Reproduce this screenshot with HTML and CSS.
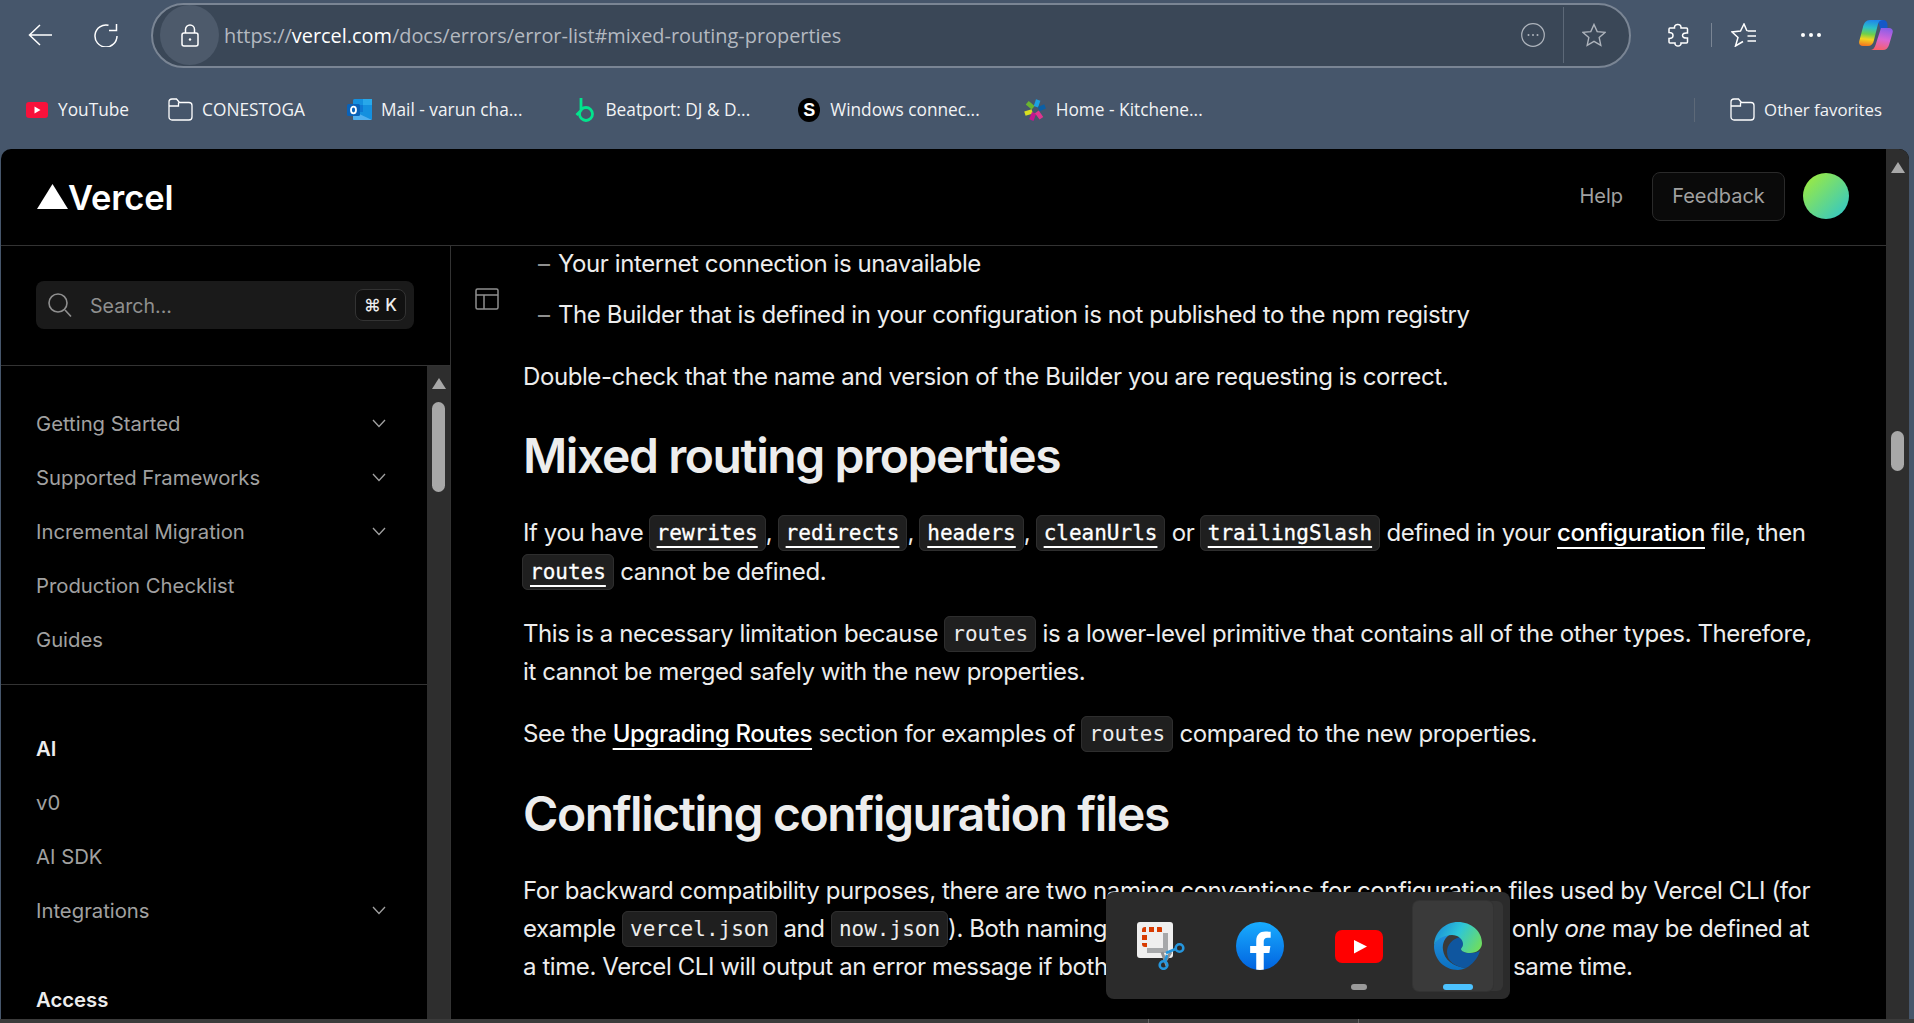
FILE: index.html
```html
<!DOCTYPE html>
<html lang="en">
<head>
  <meta charset="UTF-8" />
  <title>Vercel Docs - Error List</title>
  <link rel="stylesheet" href="styles.css">
</head>
<body>
  <!-- browser toolbar -->
  <div class="toolbar">
    <svg class="tool back" viewBox="0 0 24 22"><path d="M12 1 1.500 11l10.500 10M1.500 11h22.500"/></svg>
    <svg class="tool reload" viewBox="0 0 24 24"><path d="M14.500 2.300A11 11 0 1 0 23 13M22.500 1v6.500H15"/></svg>
    <div class="address">
      <div class="lock">
        <svg viewBox="0 0 18 23"><path d="M4.500 9V5.500a4.500 4.500 0 0 1 9 0V9"/><rect x="1" y="9" width="16" height="13" rx="2"/><circle class="dot" cx="9" cy="15.500" r="1.200"/></svg>
      </div>
      <div class="url">https://<b>vercel.com</b>/docs/errors/error-list#mixed-routing-properties</div>
      <svg class="addr-dots" viewBox="0 0 24 24"><circle cx="12" cy="12" r="11.300"/><circle class="dot" cx="7.500" cy="12" r="1"/><circle class="dot" cx="12" cy="12" r="1"/><circle class="dot" cx="16.500" cy="12" r="1"/></svg>
      <div class="addr-sep"></div>
      <svg class="addr-star" viewBox="0 0 24 24"><path d="M12 1.500 15.200 8.600 23 9.400 17.200 14.600 18.800 22.300 12 18.400 5.200 22.300 6.800 14.600 1 9.400 8.800 8.600Z"/></svg>
    </div>
    <svg class="tool puzzle" viewBox="0 0 22 24"><path d="M7.500 5C7 1 13.500 0 14 4V5H19.500a1 1 0 0 1 1 1V10C17 9.500 15.500 11 15.500 12.500C15.500 14 17 15.500 20.500 15V19a1 1 0 0 1-1 1H14C14.500 24 7.500 24 8 20H3a1 1 0 0 1-1-1V15.500C5 15.500 6 14 6 12.500C6 11 5 9.500 2 9.500V6a1 1 0 0 1 1-1Z"/></svg>
    <div class="tool-sep"></div>
    <svg class="tool favs" viewBox="0 0 26 24"><path d="M16.500 8H25M16.500 13H25M16.500 18H25M16 8 13 1 9.500 8 1 9 7 14.500 4.500 23 12 18.500"/></svg>
    <div class="more"><i></i><i></i><i></i></div>
    <svg class="copilot" viewBox="0 0 34 30">
      <defs>
        <linearGradient id="cpA" x1="0.500" y1="0" x2="0.400" y2="1"><stop offset="0" stop-color="#1f86ea"/><stop offset="0.300" stop-color="#2cc0c8"/><stop offset="0.550" stop-color="#6fd04a"/><stop offset="0.750" stop-color="#f3d51f"/><stop offset="1" stop-color="#f5781f"/></linearGradient>
        <linearGradient id="cpB" x1="0.600" y1="0" x2="0.400" y2="1"><stop offset="0" stop-color="#8a5ee8"/><stop offset="0.500" stop-color="#d765d6"/><stop offset="1" stop-color="#f7606a"/></linearGradient>
      </defs>
      <path fill="#1558c8" d="M17 0H24C27 0 28.500 2 28.500 5V9H21C21 6 20 3 17 0Z"/>
      <path fill="url(#cpB)" d="M22 8H30C33 8 34.500 10 33.500 13L30 25C29 28 27 30 24 30H11C14 30 15.500 28 16.500 25Z"/>
      <path fill="url(#cpA)" d="M11 0H24C21 0 19.500 2 19 4L15 20C14.300 24 12 26 9 26H4C1 26-.5 24 .3 21L4 7C5 3 7 0 11 0Z"/>
    </svg>
  </div>

  <!-- favorites bar -->
  <div class="favbar">
    <div class="fav fav-yt">
      <svg class="fav-icon" viewBox="0 0 22 16"><rect width="22" height="16" rx="3" fill="#f8113b"/><path d="M8.500 4.500 14.500 8 8.500 11.500Z" fill="#fff"/></svg>
      <span>YouTube</span>
    </div>
    <div class="fav fav-con">
      <svg class="folder" viewBox="0 0 25 23"><path d="M1 4a3 3 0 0 1 3-3h4.500l3 3.500H21a3 3 0 0 1 3 3V19a3 3 0 0 1-3 3H4a3 3 0 0 1-3-3ZM1 8h9.500V4.500"/></svg>
      <span>CONESTOGA</span>
    </div>
    <div class="fav fav-mail">
      <svg class="fav-icon" viewBox="0 0 25 21"><rect x="6" y="0" width="19" height="21" rx="1.500" fill="#1490df"/><rect x="16" y="0" width="9" height="6" fill="#28a8ea"/><rect x="6" y="6" width="10" height="7" fill="#0f78d4"/><path d="M6 12 25 21H7a1 1 0 0 1-1-1Z" fill="#50b0f0"/><rect x="0" y="5" width="13" height="12" rx="1.500" fill="#0a62b8"/><ellipse cx="6.500" cy="11" rx="2.500" ry="3.300" fill="none" stroke="#fff" stroke-width="1.800"/></svg>
      <span>Mail - varun cha...</span>
    </div>
    <div class="fav fav-beat">
      <svg class="fav-icon" viewBox="0 0 24 26"><path d="M8 1V13.500L3.500 18M13 23.500a6.500 6.500 0 1 0 0-13 6.500 6.500 0 0 0 0 13Z" fill="none" stroke="#02e48d" stroke-width="2.800"/></svg>
      <span>Beatport: DJ &amp; D...</span>
    </div>
    <div class="fav fav-win">
      <span class="s-badge">S</span>
      <span>Windows connec...</span>
    </div>
    <div class="fav fav-home">
      <svg class="fav-icon" viewBox="0 0 24 24" fill="none" stroke-width="5">
        <path d="M3.500 4 10 9.500" stroke="#6ab42f"/>
        <path d="M15.500 1 13 8.500" stroke="#1ba1e2"/>
        <path d="M16 11 23 8" stroke="#0b5fa5"/>
        <path d="M1 16 9 13.500" stroke="#d9e021"/>
        <path d="M8 23 11 15" stroke="#c2188f"/>
        <path d="M14 14 19 21" stroke="#e0358f"/>
      </svg>
      <span>Home - Kitchene...</span>
    </div>
    <div class="fav-sep"></div>
    <div class="fav fav-other">
      <svg class="folder" viewBox="0 0 25 23"><path d="M1 4a3 3 0 0 1 3-3h4.500l3 3.500H21a3 3 0 0 1 3 3V19a3 3 0 0 1-3 3H4a3 3 0 0 1-3-3ZM1 8h9.500V4.500"/></svg>
      <span>Other favorites</span>
    </div>
  </div>

  <!-- the page itself -->
  <div class="window">
    <div class="page">
      <header class="site-header">
        <div class="logo">
          <svg viewBox="0 0 31 25"><path d="M15.500 0 31 25H0Z" fill="#fff"/></svg>
          <span>Vercel</span>
        </div>
        <a class="help">Help</a>
        <button class="feedback">Feedback</button>
        <div class="avatar"></div>
      </header>

      <div class="columns">
        <aside class="sidebar">
          <div class="search-wrap">
            <div class="search">
              <svg viewBox="0 0 24 24"><circle cx="10" cy="10" r="9"/><path d="M17 17l6 6.500"/></svg>
              <span class="search-text">Search...</span>
              <kbd>⌘ K</kbd>
            </div>
          </div>
          <div class="nav-wrap">
            <nav class="nav">
              <div class="nav-item">Getting Started<svg class="chev" viewBox="0 0 14 9"><path d="M1 1l6 6.500L13 1"/></svg></div>
              <div class="nav-item">Supported Frameworks<svg class="chev" viewBox="0 0 14 9"><path d="M1 1l6 6.500L13 1"/></svg></div>
              <div class="nav-item">Incremental Migration<svg class="chev" viewBox="0 0 14 9"><path d="M1 1l6 6.500L13 1"/></svg></div>
              <div class="nav-item">Production Checklist</div>
              <div class="nav-item">Guides</div>
              <div class="nav-divider"></div>
              <div class="nav-item nav-head">AI</div>
              <div class="nav-item">v0</div>
              <div class="nav-item">AI SDK</div>
              <div class="nav-item">Integrations<svg class="chev" viewBox="0 0 14 9"><path d="M1 1l6 6.500L13 1"/></svg></div>
              <div class="nav-item nav-head nav-gap">Access</div>
            </nav>
            <div class="scrollbar side-scroll">
              <div class="arrow"></div>
              <div class="thumb"></div>
            </div>
          </div>
        </aside>

        <main class="main">
          <div class="gutter">
            <svg viewBox="0 0 24 22"><rect x="1" y="1" width="22" height="20" rx="1.500"/><path d="M1 7h22M9 7v14"/></svg>
          </div>
          <article class="content">
            <ul class="dash-list">
              <li>Your internet connection is unavailable</li>
              <li>The Builder that is defined in your configuration is not published to the npm registry</li>
            </ul>
            <p>Double-check that the name and version of the Builder you are requesting is correct.</p>
            <h2>Mixed routing properties</h2>
            <p class="after-h2">If you have <code><a>rewrites</a></code>, <code><a>redirects</a></code>, <code><a>headers</a></code>, <code><a>cleanUrls</a></code> or <code><a>trailingSlash</a></code> defined in your <a class="link">configuration</a> file, then<br><code><a>routes</a></code> cannot be defined.</p>
            <p>This is a necessary limitation because <code>routes</code> is a lower-level primitive that contains all of the other types. Therefore,<br>it cannot be merged safely with the new properties.</p>
            <p>See the <a class="link">Upgrading Routes</a> section for examples of <code>routes</code> compared to the new properties.</p>
            <h2>Conflicting configuration files</h2>
            <p class="after-h2">For backward compatibility purposes, there are two naming conventions for configuration files used by Vercel CLI (for<br>example <code>vercel.json</code> and <code>now.json</code>). Both naming <span class="tight">conventions are supported, however</span> only <em>one</em> may be defined at<br>a time. Vercel CLI will output an error message if both of <span class="tight">these two files are detected at</span> the same time.</p>
          </article>
        </main>
      </div>
    </div>
    <div class="scrollbar page-scroll">
      <div class="arrow"></div>
      <div class="thumb"></div>
    </div>
  </div>

  <div class="taskbar-edge"><i></i><i></i></div>

  <!-- taskbar overflow flyout, sits over the page -->
  <div class="flyout">
    <div class="fly-slot">
      <svg viewBox="0 0 48 48">
        <rect width="36" height="36" rx="3" fill="#efefef"/>
        <path d="M5 8a3 3 0 0 1 3-3h1v5H5ZM12 5h5v5h-5ZM20 5h4a3 3 0 0 1 1 .5V10h-5ZM5 13h5v5H5ZM5 21h5v4H8a3 3 0 0 1-3-3Z" fill="#d83b01"/>
        <path d="M26 11h5v20h-21v-5h16Z" fill="#a6a8aa"/>
        <path d="M25 30 30 44M34 30 29 38" stroke="#8f9194" stroke-width="3" fill="none"/>
        <circle cx="42.500" cy="26" r="3.800" fill="none" stroke="#2596dd" stroke-width="2.600"/>
        <circle cx="26.500" cy="43" r="3.800" fill="none" stroke="#2596dd" stroke-width="2.600"/>
        <path d="M38.500 27 29 31" stroke="#2596dd" stroke-width="2.600"/>
        <path d="M28 39.500 30 33" stroke="#2596dd" stroke-width="2.600"/>
      </svg>
    </div>
    <div class="fly-slot">
      <svg viewBox="0 0 24 24">
        <defs><linearGradient id="fb" x1="0.500" y1="0" x2="0.500" y2="1"><stop offset="0" stop-color="#18acfe"/><stop offset="1" stop-color="#0163e0"/></linearGradient><clipPath id="fbClip"><circle cx="12" cy="12" r="12"/></clipPath></defs>
        <circle cx="12" cy="12" r="12" fill="url(#fb)"/>
        <path clip-path="url(#fbClip)" fill="#fff" d="M16.670 15.470l.53-3.470h-3.330V9.750c0-.95.47-1.870 1.950-1.870h1.510V4.930s-1.370-.23-2.680-.23c-2.740 0-4.530 1.660-4.530 4.660V12H7.070v3.470h3.050V24h3.750v-8.530z"/>
      </svg>
    </div>
    <div class="fly-slot">
      <svg class="yt" viewBox="0 0 48 33"><rect width="48" height="33" rx="7" fill="#f00"/><path d="M19 10 32 16.500 19 23.500Z" fill="#fff"/></svg>
      <span class="pip"></span>
    </div>
    <div class="fly-slot fly-active">
      <svg viewBox="0 0 48 48">
        <defs>
          <linearGradient id="edgeA" x1="0" y1="0.300" x2="1" y2="0.700"><stop offset="0" stop-color="#1a8fd6"/><stop offset="0.450" stop-color="#2ec6d8"/><stop offset="1" stop-color="#6fdd5f"/></linearGradient>
          <linearGradient id="edgeB" x1="0.500" y1="0" x2="0.500" y2="1"><stop offset="0" stop-color="#2291dd"/><stop offset="1" stop-color="#0b6fc0"/></linearGradient>
        </defs>
        <path fill="url(#edgeB)" d="M0 24C1 17 9 12 17 12C11 15 8 21 9 28C10 37 19 45 32 46C29 47.300 26 48 24 48C10 48 0 37 0 24Z"/>
        <path fill="#0f569f" d="M13 30C13 23 18 17 26 15C29 18 29 20 29 22C29 25 27 26 27 27C27 29 31 31 36 31C40 31 44 30 46 29C44 36 38 43 32 46C21 45 13 39 13 30Z"/>
        <path fill="url(#edgeA)" d="M24 0C37 0 48 9 48 21C48 27 43 31 36 31C31 31 27 29 27 27C27 26 29 25 29 22C29 17 24 13 18 13C9 13 1 18 0 24C0 10 11 0 24 0Z"/>
      </svg>
      <span class="pip pip-on"></span>
    </div>
  </div>
</body>
</html>
```

FILE: styles.css
```css
* {
  box-sizing: border-box;
}

html,
body {
  margin: 0;
  height: 1023px;
  overflow: hidden;
}

body {
  position: relative;
  display: flex;
  flex-direction: column;
  background: #46566b;
  font-family: "Open Sans", sans-serif;
  color: #fff;
}

svg {
  display: block;
  flex: none;
  fill: none;
}

/* toolbar */
.toolbar {
  height: 70px;
  flex: none;
  display: flex;
  align-items: center;
  padding-left: 28px;
}

.tool {
  stroke: #fff;
  stroke-width: 1.5;
}

.back {
  width: 24px;
  height: 22px;
}

.reload {
  width: 24px;
  height: 24px;
  margin-left: 42px;
}

.address {
  width: 1480px;
  height: 65px;
  margin-left: 33px;
  display: flex;
  align-items: center;
  padding-left: 7px;
  background: #3a4757;
  border: 2px solid #7a8594;
  border-radius: 33px;
}

.lock {
  width: 59px;
  height: 60px;
  border-radius: 50%;
  background: #4d5a6b;
  display: flex;
  align-items: center;
  justify-content: center;
}

.lock svg {
  width: 18px;
  height: 23px;
  stroke: #fff;
  stroke-width: 1.5;
}

.dot {
  fill: #fff;
  stroke: none;
}

.url {
  flex: 1;
  margin-left: 5px;
  font-size: 19.9px;
  color: #b4b9c0;
  white-space: nowrap;
}

.url b {
  font-weight: 400;
  color: #fff;
}

.addr-dots {
  width: 24px;
  height: 24px;
  stroke: #aeb4bc;
  stroke-width: 1.2;
}

.addr-dots .dot {
  fill: #aeb4bc;
}

.addr-sep {
  width: 1px;
  height: 56px;
  margin-left: 18px;
  background: #5d6978;
}

.addr-star {
  width: 24px;
  height: 24px;
  margin: 0 23px 0 18px;
  stroke: #aeb4bc;
  stroke-width: 1.4;
}

.puzzle {
  width: 22px;
  height: 24px;
  margin-left: 36px;
}

.tool-sep {
  width: 1px;
  height: 24px;
  margin-left: 22px;
  background: #7a8594;
}

.favs {
  width: 26px;
  height: 24px;
  margin-left: 19px;
}

.more {
  width: 20px;
  margin-left: 44px;
  display: flex;
  justify-content: space-between;
}

.more i {
  width: 4px;
  height: 4px;
  background: #fff;
  border-radius: 50%;
}

.copilot {
  width: 34px;
  height: 30px;
  margin-left: 38px;
}

/* favorites */
.favbar {
  height: 79px;
  flex: none;
  display: flex;
  align-items: center;
  padding: 0 0 0 26px;
  font-size: 17.3px;
  white-space: nowrap;
}

.fav {
  display: flex;
  align-items: center;
  gap: 10px;
  color: #f2f3f5;
}

.fav-icon {
  width: 22px;
  height: 22px;
}

.fav-yt .fav-icon {
  height: 16px;
}

.fav-con {
  gap: 9px;
  margin-left: 39px;
}

.fav-mail {
  gap: 9px;
  margin-left: 42px;
}

.fav-mail .fav-icon {
  width: 25px;
  height: 21px;
}

.fav-beat {
  gap: 8px;
  margin-left: 51px;
}

.fav-beat .fav-icon {
  width: 24px;
  height: 26px;
}

.fav-win {
  margin-left: 48px;
}

.fav-home {
  margin-left: 44px;
}

.folder {
  width: 25px;
  height: 23px;
  stroke: #fff;
  stroke-width: 1.3;
}

.s-badge {
  width: 22px;
  height: 24px;
  border-radius: 50%;
  background: #000;
  color: #fff;
  font-family: "Liberation Sans", sans-serif;
  font-size: 18px;
  font-weight: 700;
  text-align: center;
  line-height: 24px;
}

.fav-sep {
  width: 1px;
  height: 24px;
  margin-left: auto;
  background: #5d6978;
}

.fav-other {
  gap: 9px;
  margin: 0 32px 0 35px;
  font-size: 16.8px;
}

/* page window */
.window {
  height: 870px;
  flex: none;
  margin: 0 5px 0 1px;
  display: flex;
  background: #000;
  border-radius: 10px 10px 0 0;
  overflow: hidden;
}

.page {
  flex: 1;
  min-width: 0;
  display: flex;
  flex-direction: column;
  font-family: Inter, sans-serif;
}

.scrollbar {
  flex: none;
  background: #2e2e2e;
  position: relative;
  display: flex;
  flex-direction: column;
  align-items: center;
}

.arrow {
  width: 0;
  height: 0;
  border-left: 7px solid transparent;
  border-right: 7px solid transparent;
  border-bottom: 11px solid #a8a8a8;
}

.thumb {
  width: 13px;
  background: #a8a8a8;
  border-radius: 7px;
}

.page-scroll {
  width: 23px;
  padding-top: 13px;
}

.page-scroll .thumb {
  height: 40px;
  margin-top: 258px;
}

.side-scroll {
  width: 23px;
  padding-top: 12px;
}

.side-scroll .thumb {
  height: 90px;
  margin-top: 13px;
}

/* site header */
.site-header {
  height: 97px;
  flex: none;
  display: flex;
  align-items: center;
  padding: 0 37px 2px 36px;
  border-bottom: 1px solid #333;
}

.logo {
  display: flex;
  align-items: center;
  gap: 0;
  margin-right: auto;
  font-size: 34.5px;
  font-weight: 600;
  letter-spacing: -0.1px;
  color: #fff;
}

.logo span {
  margin-top: 2px;
}

.logo svg {
  width: 31px;
  height: 25px;
}

.help {
  font-size: 20px;
  color: #a1a1a1;
}

.feedback {
  width: 133px;
  height: 49px;
  margin: 0 18px 0 29px;
  background: #0a0a0a;
  border: 1px solid #2a2a2a;
  border-radius: 8px;
  font: 20px Inter, sans-serif;
  color: #a1a1a1;
}

.avatar {
  width: 46px;
  height: 46px;
  border-radius: 50%;
  background: linear-gradient(135deg, #a6ee34, #2bc4d0);
}

.columns {
  flex: 1;
  min-height: 0;
  display: flex;
}

/* sidebar */
.sidebar {
  width: 450px;
  flex: none;
  display: flex;
  flex-direction: column;
  border-right: 1px solid #333;
}

.search-wrap {
  height: 120px;
  flex: none;
  padding: 35px 36px 0 35px;
  border-bottom: 1px solid #333;
}

.search {
  height: 48px;
  display: flex;
  align-items: center;
  padding: 0 8px 0 12px;
  background: #1a1a1a;
  border-radius: 8px;
}

.search svg {
  width: 24px;
  height: 24px;
  stroke: #8f8f8f;
  stroke-width: 1.6;
}

.search-text {
  flex: 1;
  margin: 2px 0 0 18px;
  font-size: 19.6px;
  color: #8f8f8f;
}

kbd {
  width: 51px;
  height: 32px;
  border: 1px solid #333;
  border-radius: 8px;
  background: #111;
  font: 500 17px/30px Inter, "DejaVu Sans", sans-serif;
  text-align: center;
  color: #ededed;
}

.nav-wrap {
  flex: 1;
  min-height: 0;
  display: flex;
}

.nav {
  flex: 1;
  min-width: 0;
  padding-top: 30px;
  overflow: hidden;
}

.nav-item {
  height: 54px;
  display: flex;
  align-items: center;
  justify-content: space-between;
  padding: 0 41px 0 35px;
  font-size: 20.3px;
  color: #a1a1a1;
}

.nav-head {
  font-weight: 600;
  color: #ededed;
}

.nav-gap {
  margin-top: 35px;
}

.nav-divider {
  height: 1px;
  margin: 18px 0 36px;
  background: #333;
}

.chev {
  width: 14px;
  height: 9px;
  stroke: #a1a1a1;
  stroke-width: 1.3;
}

/* main */
.main {
  flex: 1;
  min-width: 0;
  display: flex;
  overflow: hidden;
}

.gutter {
  width: 72px;
  flex: none;
  padding: 42px 0 0 24px;
}

.gutter svg {
  width: 24px;
  height: 22px;
  stroke: #8f8f8f;
  stroke-width: 1.5;
}

.content {
  flex: 1;
  min-width: 0;
  font-size: 24px;
  line-height: 38.4px;
  letter-spacing: -0.41px;
  color: #ededed;
  white-space: nowrap;
}

.dash-list {
  margin: -1px 0 0;
  padding: 0 0 0 35px;
  list-style: none;
}

.dash-list li {
  position: relative;
  margin-bottom: 12.6px;
}

.dash-list li::before {
  content: "–";
  position: absolute;
  left: -20px;
  color: #8f8f8f;
}

p {
  margin: 23.6px 0 0;
}

p.after-h2 {
  margin-top: 28px;
}

h2 {
  margin: 30px 0 0;
  font-size: 48px;
  line-height: 60px;
  font-weight: 600;
  letter-spacing: -1.4px;
  color: #ededed;
}

em {
  font-style: italic;
}

.tight {
  letter-spacing: -0.66px;
}

.link {
  font-weight: 500;
  color: #fff;
  text-decoration: underline;
  text-decoration-thickness: 1.5px;
  text-underline-offset: 6px;
}

code {
  padding: 5px 7px;
  background: #1f1f1f;
  border: 1px solid #2e2e2e;
  border-radius: 6px;
  font-family: "DejaVu Sans Mono", monospace;
  font-size: 21px;
  line-height: 1;
  letter-spacing: 0;
  color: #ededed;
  vertical-align: 1px;
}

code:has(a) {
  margin-left: -1px;
}

code a {
  color: #fff;
  -webkit-text-stroke: 0.3px #fff;
  text-decoration: underline;
  text-decoration-thickness: 2px;
  text-decoration-skip-ink: none;
  text-underline-offset: 6px;
}

/* taskbar */
.taskbar-edge {
  flex: 1;
  background: #3b3b3b;
  position: relative;
}

.taskbar-edge i {
  position: absolute;
  top: 0;
  width: 1px;
  height: 4px;
  background: #666;
}

.taskbar-edge i:first-child {
  left: 1148px;
}

.taskbar-edge i:last-child {
  left: 1358px;
}

.flyout {
  position: absolute;
  left: 1106px;
  top: 892px;
  width: 404px;
  height: 107px;
  display: flex;
  padding: 9px 0 0 5px;
  background: #2b2b2b;
  border-radius: 8px;
}

.fly-slot {
  position: relative;
  width: 99px;
  height: 90px;
  display: flex;
  align-items: center;
  justify-content: center;
}

.fly-slot svg {
  position: relative;
  width: 48px;
  height: 48px;
}

.fly-slot .yt {
  height: 33px;
}

/* the open app has a stacked tile behind it */
.fly-active::before,
.fly-active::after {
  content: "";
  position: absolute;
  top: 0;
  left: 5px;
  height: 90px;
  border-radius: 6px;
}

.fly-active::before {
  width: 90px;
  background: #353535;
}

.fly-active::after {
  width: 80px;
  background: #3a3a3a;
  box-shadow: 0 0 0 1px #333;
}

.fly-active svg {
  z-index: 1;
}

.pip {
  position: absolute;
  left: 50%;
  bottom: 1px;
  z-index: 1;
  width: 16px;
  height: 6px;
  margin-left: -8px;
  background: #9a9a9a;
  border-radius: 3px;
}

.pip-on {
  width: 30px;
  margin-left: -15px;
  background: #4cc2ff;
}
```
